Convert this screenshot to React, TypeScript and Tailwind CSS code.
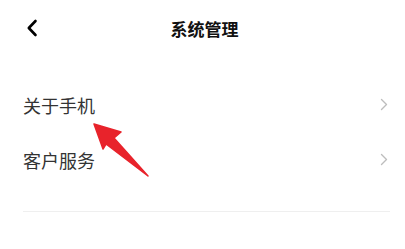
import React from 'react';

function Chevron({ className }: { className?: string }) {
  return (
    <svg viewBox="0 0 8 13" className={className} fill="none">
      <path d="M1.5 1.5 L6.5 6.5 L1.5 11.5" stroke="currentColor" strokeWidth="1.4" strokeLinecap="round" strokeLinejoin="round" />
    </svg>
  );
}

export default function App() {
  const rows = ['关于手机', '客户服务'];
  return (
    <div
      className="relative w-[405px] h-[249px] bg-white overflow-hidden"
      style={{ fontFamily: '"Noto Sans CJK SC", "Noto Sans", sans-serif' }}
    >
      <div className="relative flex items-center justify-center h-[57px]">
        <svg viewBox="0 0 12 18" className="absolute left-[26px] top-[19px] w-[12px] h-[18px] text-black" fill="none">
          <path d="M9.5 2 L2.8 9 L9.5 16" stroke="currentColor" strokeWidth="2.6" strokeLinecap="round" strokeLinejoin="round" />
        </svg>
        <span className="text-[17px] font-bold text-[#111] ml-[4px]">系统管理</span>
      </div>

      <div className="mt-[20px] pl-[23px] pr-[15px]">
        {rows.map((r) => (
          <div key={r} className="flex items-center justify-between h-[55px]">
            <span className="text-[18px] text-[#333] leading-none">{r}</span>
            <Chevron className="w-[8px] h-[13px] text-[#bdbdbd] mr-[2px]" />
          </div>
        ))}
        <div className="mt-[24px] h-px bg-[#efefef]" />
      </div>

      <svg className="absolute inset-0 w-[405px] h-[249px] pointer-events-none" viewBox="0 0 405 249">
        <polygon
          points="94,124 121,132 114,138 148,176 106,144 103,149"
          fill="#e8232b"
          stroke="#e8232b"
          strokeWidth="1.5"
          strokeLinejoin="round"
        />
      </svg>
    </div>
  );
}
